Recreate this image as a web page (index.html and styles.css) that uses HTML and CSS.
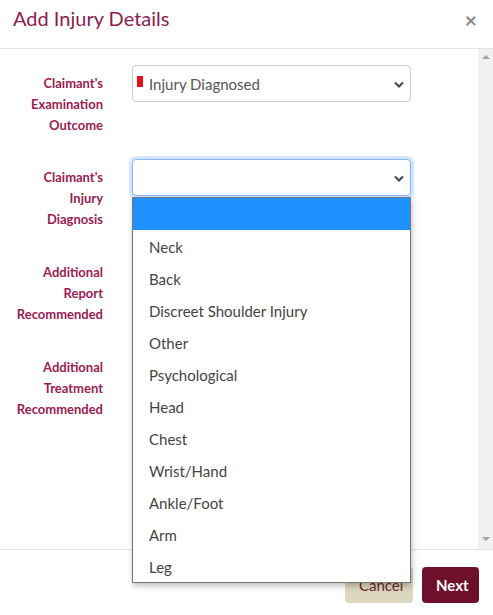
FILE: index.html
```html
<!DOCTYPE html>
<html lang="en">
<head>
    <meta charset="UTF-8">
    <meta name="viewport" content="width=device-width, initial-scale=1.0">
    <title>Add Injury Details</title>
    <link rel="stylesheet" href="styles.css">
</head>
<body>
    <div class="modal">
        <!-- Header -->
        <div class="modal-header">
            <h2 class="modal-title">Add Injury Details</h2>
            <span class="close-btn">&times;</span>
        </div>

        <!-- Body -->
        <div class="modal-body">
            <div class="form-area">
                <div class="form-row">
                    <label class="form-label">Claimant's Examination Outcome</label>
                    <div class="select-box">
                        <span class="flag"></span>
                        <span class="select-text">Injury Diagnosed</span>
                        <svg class="chevron" width="10" height="7" viewBox="0 0 10 7"><path d="M1 1.5 L5 5.5 L9 1.5" fill="none" stroke="#444" stroke-width="2"/></svg>
                    </div>
                </div>
                <div class="form-row">
                    <label class="form-label">Claimant's Injury Diagnosis</label>
                    <div class="select-box focused">
                        <span class="select-text"></span>
                        <svg class="chevron" width="10" height="7" viewBox="0 0 10 7"><path d="M1 1.5 L5 5.5 L9 1.5" fill="none" stroke="#444" stroke-width="2"/></svg>
                    </div>
                </div>
                <div class="form-row">
                    <label class="form-label">Additional Report Recommended</label>
                </div>
                <div class="form-row">
                    <label class="form-label">Additional Treatment Recommended</label>
                </div>
            </div>
            <div class="scrollbar">
                <span class="arrow up"></span>
                <span class="arrow down"></span>
            </div>
        </div>

        <!-- Footer -->
        <div class="modal-footer">
            <button class="btn btn-cancel">Cancel</button>
            <button class="btn btn-next">Next</button>
        </div>

        <!-- Open dropdown list -->
        <ul class="dropdown">
            <li class="selected">&nbsp;</li>
            <li>Neck</li>
            <li>Back</li>
            <li>Discreet Shoulder Injury</li>
            <li>Other</li>
            <li>Psychological</li>
            <li>Head</li>
            <li>Chest</li>
            <li>Wrist/Hand</li>
            <li>Ankle/Foot</li>
            <li>Arm</li>
            <li>Leg</li>
        </ul>
    </div>
</body>
</html>
```

FILE: styles.css
```css
:root {
    --maroon: #8b1d4f;
    --label: #9a1c52;
    --border: #e5e5e5;
    --text: #444;
}

* {
    margin: 0;
    padding: 0;
    box-sizing: border-box;
    font-family: 'Lato', 'Open Sans', sans-serif;
}

body {
    background: #fff;
    color: var(--text);
}

.modal {
    position: relative;
    width: 493px;
    height: 615px;
}

/* Header */
.modal-header {
    height: 49px;
    border-bottom: 1px solid var(--border);
    display: flex;
    justify-content: space-between;
    align-items: flex-start;
    padding: 6px 16px 0 13px;
}

.modal-title {
    font-size: 20px;
    font-weight: 400;
    color: var(--maroon);
}

.close-btn {
    font-size: 21px;
    line-height: 22px;
    font-weight: 700;
    color: #8a8a8a;
    margin-top: 3px;
}

/* Body */
.modal-body {
    height: 501px;
    display: flex;
    border-bottom: 1px solid var(--border);
}

.form-area {
    flex: 1;
    padding-top: 16px;
}

.form-row {
    display: grid;
    grid-template-columns: 103px 279px;
    column-gap: 29px;
    align-items: start;
    height: 95px;
}

.form-row:first-child {
    height: 94px;
}

.form-label {
    text-align: right;
    font-size: 13px;
    font-weight: 700;
    line-height: 21px;
    color: var(--label);
    padding-top: 8px;
    padding-left: 14px;
}

.select-box {
    position: relative;
    height: 37px;
    border: 1px solid #ccc;
    border-radius: 4px;
    display: flex;
    align-items: center;
    padding-left: 4px;
    background: #fff;
}

.select-box.focused {
    border-color: #86b7fe;
    box-shadow: 0 0 0 3px rgba(13, 110, 253, 0.18);
}

.flag {
    width: 6px;
    height: 11px;
    background: #e8101b;
    margin-right: 6px;
    margin-bottom: 4px;
}

.select-text {
    font-size: 15px;
    color: #555;
}

.chevron {
    position: absolute;
    right: 6px;
    top: 15px;
}

.scrollbar {
    width: 15px;
    background: #f1f1f1;
    display: flex;
    flex-direction: column;
    justify-content: space-between;
    align-items: center;
    padding: 6px 0 8px;
}

.arrow {
    width: 0;
    height: 0;
    border-left: 4px solid transparent;
    border-right: 4px solid transparent;
}

.arrow.up {
    border-bottom: 4px solid #a3a3a3;
}

.arrow.down {
    border-top: 4px solid #a3a3a3;
}

/* Footer */
.modal-footer {
    display: flex;
    justify-content: flex-end;
    gap: 9px;
    padding: 17px 14px 0 0;
}

.btn {
    height: 36px;
    border: none;
    border-radius: 4px;
    font-size: 15px;
    padding: 0 14px;
}

.btn-cancel {
    width: 68px;
    background: #dcd7bf;
    color: #6b2a2a;
}

.btn-next {
    width: 57px;
    background: #6e0f2c;
    color: #fff;
    font-weight: 700;
}

/* Dropdown overlay */
.dropdown {
    position: absolute;
    left: 132px;
    top: 197px;
    width: 279px;
    list-style: none;
    background: #fff;
    border: 1px solid #767676;
    box-shadow: 1px 3px 6px rgba(0, 0, 0, 0.25);
}

.dropdown li {
    height: 32px;
    line-height: 34px;
    padding-left: 16px;
    font-size: 15px;
    color: var(--text);
}

.dropdown li.selected {
    background: #1e90ff;
}
```
